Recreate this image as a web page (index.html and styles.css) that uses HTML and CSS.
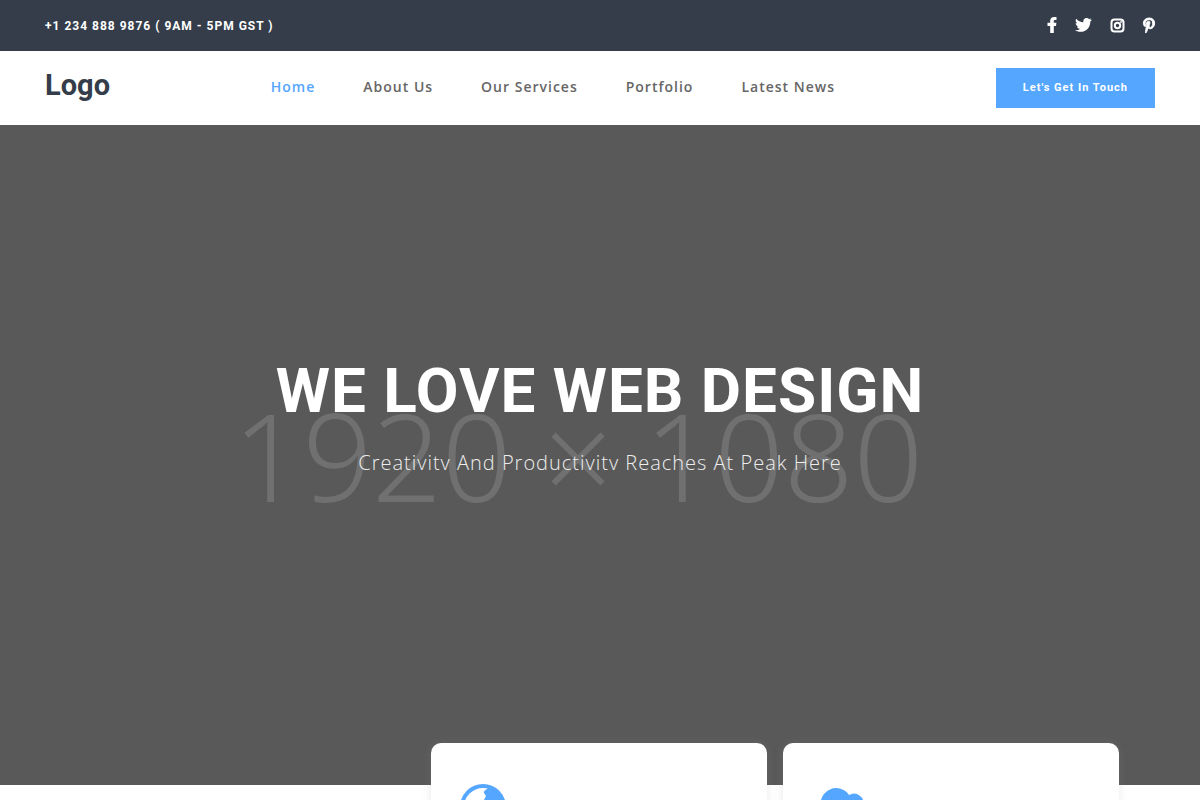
FILE: index.html
```html
<!DOCTYPE html>
<html lang="en">
<head>
<meta charset="utf-8">
<meta name="viewport" content="width=device-width, initial-scale=1">
<title>We Love Web Design</title>
<link rel="stylesheet" href="styles.css">
</head>
<body>
<div class="topbar">
  <a class="phone" href="tel:+12348889876">+1 234 888 9876 ( 9AM - 5PM GST )</a>
  <div class="social">
    <a href="#" aria-label="Facebook"><svg width="10" height="16" viewBox="0 0 9 16"><path d="M9 .1v2.900H7.400C6.400 3 6.300 3.500 6.300 4.200V5.800h2.600l-.4 3.200H6.300v7H2.700V9H0V5.800h2.700V3.800C2.700 1.300 4.300 0 6.600 0 7.700 0 8.700.05 9 .1z"/></svg></a>
    <a href="#" aria-label="Twitter"><svg width="17" height="14" viewBox="0 0 16 13"><path d="M16 1.500c-.5.700-1 1.200-1.600 1.700v.4c0 4.300-3.200 9.300-9.300 9.300C3.200 12.900 1.400 12.400 0 11.500c1.800.2 3.500-.3 4.800-1.400-1.400 0-2.600-1-3-2.300.5.100 1 .1 1.500-.1C1.700 7.400.6 6.100.6 4.500c.5.300 1 .4 1.500.4C.6 3.900.2 2 1.100.6c1.700 2 4.100 3.300 6.800 3.400C7.400 1.700 9 0 11 0c.9 0 1.800.4 2.400 1 .7-.1 1.400-.4 2-.8-.2.800-.7 1.400-1.400 1.800.7-.1 1.400-.3 2-.5z"/></svg></a>
    <a href="#" aria-label="Instagram"><svg class="line" width="15" height="15" viewBox="0 0 15 15"><rect x="1.500" y="1.500" width="12" height="12" rx="3"/><circle cx="7.500" cy="7.500" r="2.700"/><circle class="dot" cx="11" cy="4" r=".9"/></svg></a>
    <a href="#" aria-label="Pinterest"><svg class="bold" width="12" height="15" viewBox="0 0 12 16"><path d="M0 5.400C0 2 3 0 6.300 0 9.500 0 12 2.200 12 5.300c0 3.300-1.800 6.200-4.800 6.200-.9 0-1.900-.5-2.300-1.200-.6 2.300-.7 3.700-2.300 5.700l-.2-.1c-.3-2.200.3-4.200 1.100-7.600C2.700 6.300 3.500 3.500 5.500 3.500c2.800 0 1 3.300.7 4.800-.3 1.200.6 1.700 1.300 1.700 1.700 0 2.400-2.600 2.400-4.500 0-2.600-1.700-3.700-3.800-3.700-2.300 0-4.200 1.600-4.200 4 0 1.200.8 1.700.8 2.100 0 .4-.2 1.300-.7 1.300C1.200 9.200 0 7.900 0 5.400z"/></svg></a>
  </div>
</div>
<header class="header">
  <a class="logo" href="#">Logo</a>
  <nav class="nav">
    <a class="active" href="#">Home</a>
    <a href="#">About Us</a>
    <a href="#">Our Services</a>
    <a href="#">Portfolio</a>
    <a href="#">Latest News</a>
  </nav>
  <button class="cta" type="button">Let's Get In Touch</button>
</header>
<main>
  <section class="hero">
    <div class="backdrop" aria-hidden="true">1920 × 1080</div>
    <div class="intro">
      <h1>WE LOVE WEB DESIGN</h1>
      <p>Creativity And Productivity Reaches At Peak Here</p>
    </div>
  </section>
  <section class="cards">
    <article class="card"><svg width="46" height="46" viewBox="0 0 46 46"><circle class="ring" cx="23" cy="23" r="21"/><path d="M28 4c-2 2-5 3-4 5l2 3-2 4 2 6 10 3 8-2C44 12 37 5 28 4zM5 17l9 8 4 8-3 8C6 37 2 26 5 17z"/></svg></article>
    <article class="card"><svg width="58" height="46" viewBox="0 0 58 46"><path d="M12 46a12 12 0 0 1-3-23A15.500 15.500 0 0 1 37 11a9.500 9.500 0 0 1 14 11 12 12 0 0 1-4 24z"/></svg></article>
  </section>
</main>
</body>
</html>
```
FILE: styles.css
```css
* { box-sizing: border-box; }

body {
  margin: 0;
  height: 100vh;
  display: flex;
  flex-direction: column;
  overflow: hidden;
  background: #fff;
  font-family: "Open Sans", sans-serif;
}

a { color: inherit; text-decoration: none; }
svg { display: block; fill: currentColor; }

.topbar {
  flex: none;
  display: flex;
  align-items: center;
  justify-content: space-between;
  height: 51px;
  padding: 0 45px;
  background: #343d49;
  color: #fff;
}

.phone {
  font: 700 12px/18px Roboto, sans-serif;
  letter-spacing: 1px;
}

.social { display: flex; align-items: center; gap: 18px; padding-bottom: 1px; }

.line { fill: none; stroke: currentColor; stroke-width: 2; }
.line .dot { fill: currentColor; stroke: none; }
.bold { stroke: currentColor; stroke-width: 1; overflow: visible; }

.header {
  flex: none;
  display: flex;
  align-items: center;
  justify-content: space-between;
  padding: 17px 45px;
  background: #fff;
}

.logo {
  padding-bottom: 6px;
  color: #343d49;
  font: 700 29px/34px Roboto, sans-serif;
}

.nav {
  display: flex;
  gap: 48px;
  padding-bottom: 2px;
  color: #666;
  font: 600 14px/20px "Open Sans", sans-serif;
  letter-spacing: 1px;
}

.nav .active { color: #55a6ff; }

.cta {
  height: 40px;
  padding: 0 27px;
  border: 0;
  background: #55a6ff;
  color: #fff;
  font: 700 11px/16px Roboto, sans-serif;
  letter-spacing: 1px;
}

main { flex: none; }

.hero {
  display: grid;
  place-items: center;
  height: 660px;
  background: #595959;
  color: #fff;
}

.hero > * { grid-area: 1 / 1; }

.backdrop {
  padding-right: 44px;
  color: #707070;
  font: 300 122px/164px "Noto Sans", "Open Sans", sans-serif;
  white-space: nowrap;
}

.intro { text-align: center; padding-bottom: 88px; }

h1 {
  margin: 0;
  font: 700 62px/78px Roboto, sans-serif;
  letter-spacing: 1px;
}

p {
  margin: 20px 0 0;
  height: 20px;
  overflow: hidden;
  color: #eee;
  font: 300 20px/26px "Open Sans", sans-serif;
  letter-spacing: 1px;
}

.cards {
  display: grid;
  grid-template-columns: 1fr 1fr;
  gap: 16px;
  margin: -42px 81px 0 431px;
}

.card {
  min-height: 260px;
  padding: 41px 29px;
  border-radius: 10px;
  background: #fff;
  box-shadow: 0 0 10px rgba(150, 150, 150, .2);
  color: #55a6ff;
}

.ring { fill: none; stroke: currentColor; stroke-width: 4; }
```
